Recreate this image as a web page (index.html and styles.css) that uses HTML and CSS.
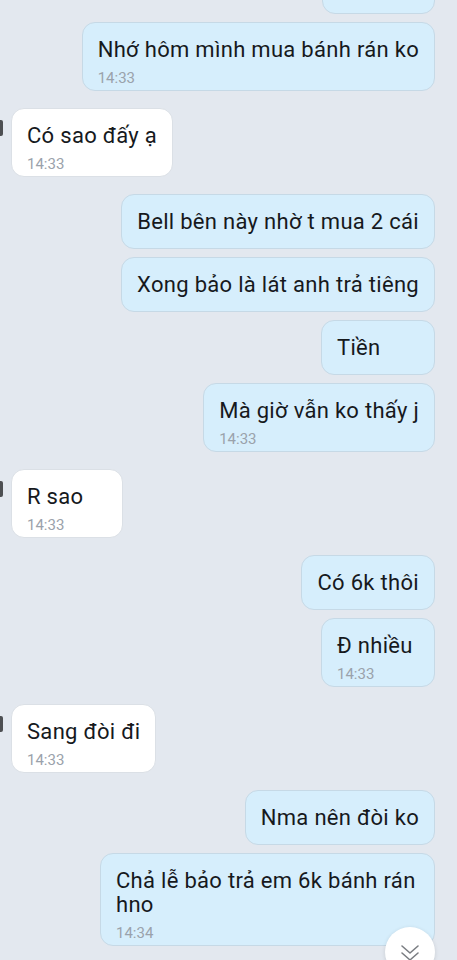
FILE: index.html
```html
<!DOCTYPE html>
<html lang="vi">
<head>
<meta charset="utf-8">
<title>Chat</title>
<link rel="stylesheet" href="styles.css">
</head>
<body>
<main class="chat">
  <div class="row me first"><div class="bubble partial" aria-hidden="true"></div></div>

  <div class="row me same"><div class="bubble">Nhớ hôm mình mua bánh rán ko<div class="time">14:33</div></div></div>

  <div class="row them switch"><span class="avatar"></span><div class="bubble">Có sao đấy ạ<div class="time">14:33</div></div></div>

  <div class="row me switch"><div class="bubble">Bell bên này nhờ t mua 2 cái</div></div>
  <div class="row me same"><div class="bubble">Xong bảo là lát anh trả tiêng</div></div>
  <div class="row me same"><div class="bubble">Tiền</div></div>
  <div class="row me same"><div class="bubble">Mà giờ vẫn ko thấy j<div class="time">14:33</div></div></div>

  <div class="row them switch"><span class="avatar"></span><div class="bubble">R sao<div class="time">14:33</div></div></div>

  <div class="row me switch"><div class="bubble">Có 6k thôi</div></div>
  <div class="row me same"><div class="bubble">Đ nhiều<div class="time">14:33</div></div></div>

  <div class="row them switch"><span class="avatar"></span><div class="bubble">Sang đòi đi<div class="time">14:33</div></div></div>

  <div class="row me switch"><div class="bubble">Nma nên đòi ko</div></div>
  <div class="row me same"><div class="bubble narrow">Chả lễ bảo trả em 6k bánh rán hno<div class="time">14:34</div></div></div>
</main>

<button class="scroll-down" type="button" aria-label="Cuộn xuống">
  <svg width="22" height="20" viewBox="0 0 22 20" fill="none" stroke="#7a7d82" stroke-width="1.6" stroke-linecap="round" stroke-linejoin="round">
    <polyline points="3,3 11,10 19,3"/>
    <polyline points="3,10 11,17 19,10"/>
  </svg>
</button>
</body>
</html>
```

FILE: styles.css
```css
* { box-sizing: border-box; }

html, body {
  margin: 0;
  padding: 0;
  height: 100%;
  overflow: hidden;
}

body {
  background: #e3e8ef;
  font-family: Roboto, "Noto Sans", "Liberation Sans", sans-serif;
  color: #16191d;
}

.chat {
  display: flex;
  flex-direction: column;
  padding: 0 22px 0 0;
  margin-top: -41px;
}

.row {
  display: flex;
  align-items: flex-start;
}

.row.me { justify-content: flex-end; }
.row.them { justify-content: flex-start; }

.row.same { margin-top: 8px; }
.row.switch { margin-top: 17px; }

.avatar {
  width: 3px;
  height: 16px;
  margin-top: 12px;
  margin-right: 8px;
  background: #4d4f52;
  border-radius: 0 2px 2px 0;
}

.bubble {
  min-width: 114px;
  max-width: 362px;
  padding: 15px 15px 14px;
  font-size: 22px;
  letter-spacing: 0.3px;
  line-height: 24px;
  border-radius: 13px;
  border: 1px solid #c6d9e6;
  background: #d6eefc;
}

.bubble.partial {
  width: 113px;
  min-width: 0;
  height: 55px;
}

.row.them .bubble {
  min-width: 112px;
  background: #ffffff;
  border-color: #dbe0e6;
}

.bubble.narrow { max-width: 335px; }

.bubble:has(.time) { padding-bottom: 4px; }

.time {
  margin-top: 8px;
  font-size: 15px;
  letter-spacing: 0;
  line-height: 16px;
  color: #9aa2ab;
}

.scroll-down {
  position: fixed;
  left: 385px;
  top: 927px;
  width: 50px;
  height: 50px;
  padding: 0;
  border: none;
  border-radius: 50%;
  background: #ffffff;
  box-shadow: 0 1px 4px rgba(0, 0, 0, 0.12);
  display: flex;
  align-items: flex-start;
  justify-content: center;
  padding-top: 16px;
}
```
